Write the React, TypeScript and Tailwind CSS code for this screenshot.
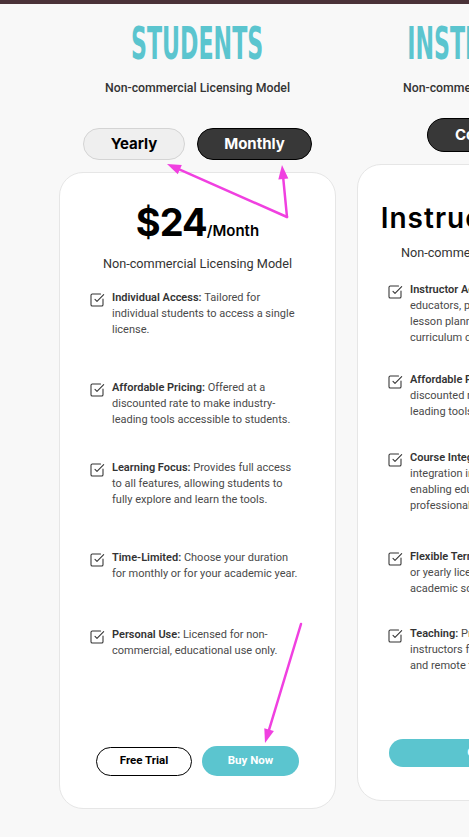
import { SquareCheckBig } from "lucide-react";
import type { ReactNode } from "react";

function Title({ children }: { children: ReactNode }) {
  return (
    <div className="mt-[18px] h-[44px] flex justify-center items-start">
      <span className="inline-block text-[44px] leading-none font-bold text-[#5bc5cf] scale-x-[0.56] whitespace-nowrap font-[family-name:'Liberation_Sans_Narrow','DejaVu_Sans_Condensed',sans-serif]">
        {children}
      </span>
    </div>
  );
}

function Feature({
  label,
  lines,
  className,
}: {
  label: string;
  lines: string[];
  className: string;
}) {
  return (
    <div className={"flex gap-[7px] " + className}>
      <SquareCheckBig
        size={16}
        strokeWidth={1.6}
        color="#333333"
        className="shrink-0 mt-[2px]"
      />
      <p className="text-[11px] leading-[16px] text-[#4a4a4a] whitespace-nowrap">
        {lines.map((l, i) => (
          <span key={i} className="block">
            {i === 0 && <span className="font-semibold text-[#333]">{label} </span>}
            {l}
          </span>
        ))}
      </p>
    </div>
  );
}

export default function App() {
  return (
    <div className="relative w-[469px] h-[837px] overflow-hidden bg-[#f8f8f8] font-[family-name:Roboto,sans-serif]">
      <div className="h-[4px] bg-[#4a3238]" />
      <div className="flex pl-[59px] gap-[21px]">
        {/* Students column */}
        <div className="w-[277px] shrink-0 flex flex-col items-center">
          <Title>STUDENTS</Title>
          <p className="mt-[14px] text-[12.3px] leading-[16px] font-medium text-[#333] whitespace-nowrap">
            Non-commercial Licensing Model
          </p>
          <div className="mt-[32px] flex gap-[12px] font-[family-name:Inter,sans-serif]">
            <button className="w-[102px] h-[32px] rounded-full bg-[#efefef] border border-[#d4d4d4] text-[15px] font-bold text-black">
              Yearly
            </button>
            <button className="w-[115px] h-[32px] rounded-full bg-[#383838] border border-black text-[15px] font-bold text-white">
              Monthly
            </button>
          </div>
          <div className="mt-[12px] w-full h-[637px] rounded-[24px] bg-white border border-[#e6e6e6] flex flex-col">
            <div className="mt-[29px] flex items-baseline justify-center font-[family-name:Inter,sans-serif] text-black">
              <span className="text-[38px] leading-[40px] font-bold tracking-[-1px]">$24</span>
              <span className="text-[15px] font-semibold">/Month</span>
            </div>
            <p className="mt-[13px] text-center text-[12.7px] leading-[16px] text-[#333]">
              Non-commercial Licensing Model
            </p>
            <div className="mt-[18px] pl-[29px] flex flex-col">
              <Feature
                className="h-[90px]"
                label="Individual Access:"
                lines={["Tailored for", "individual students to access a single", "license."]}
              />
              <Feature
                className="h-[80px]"
                label="Affordable Pricing:"
                lines={["Offered at a", "discounted rate to make industry-", "leading tools accessible to students."]}
              />
              <Feature
                className="h-[90px]"
                label="Learning Focus:"
                lines={["Provides full access", "to all features, allowing students to", "fully explore and learn the tools."]}
              />
              <Feature
                className="h-[77px]"
                label="Time-Limited:"
                lines={["Choose your duration", "for monthly or for your academic year."]}
              />
              <Feature
                className="h-[32px]"
                label="Personal Use:"
                lines={["Licensed for non-", "commercial, educational use only."]}
              />
            </div>
            <div className="mt-auto mb-[32px] flex justify-center items-center gap-[10px] font-[family-name:Roboto,sans-serif]">
              <button className="w-[96px] h-[29px] rounded-full border border-black bg-white text-[11.5px] font-bold text-black">
                Free Trial
              </button>
              <button className="w-[97px] h-[30px] rounded-full bg-[#5bc5cf] text-[11.5px] font-bold text-white">
                Buy Now
              </button>
            </div>
          </div>
        </div>

        {/* Instructors column */}
        <div className="w-[277px] shrink-0 flex flex-col items-center">
          <Title>INSTRUCTORS</Title>
          <p className="mt-[14px] text-[12.3px] leading-[16px] font-medium text-[#333] whitespace-nowrap">
            Non-commercial Licensing Model
          </p>
          <div className="mt-[22px] flex font-[family-name:Inter,sans-serif]">
            <button className="w-[137px] h-[34px] rounded-full bg-[#383838] border border-black text-[15px] font-bold text-white">
              Contact Us
            </button>
          </div>
          <div className="mt-[12px] w-full h-[637px] rounded-[24px] bg-white border border-[#e6e6e6] flex flex-col">
            <p className="mt-[39px] text-center text-[28px] leading-[28px] font-semibold tracking-[1px] text-black whitespace-nowrap font-[family-name:Inter,sans-serif]">
              Instructor Plans
            </p>
            <p className="mt-[13px] text-center text-[12.7px] leading-[16px] text-[#333] whitespace-nowrap">
              Non-commercial Licensing Model
            </p>
            <div className="mt-[21px] pl-[29px] flex flex-col">
              <Feature
                className="h-[90px]"
                label="Instructor Access:"
                lines={["Tailored for", "educators,  providing tools for", "lesson planning and", "curriculum design."]}
              />
              <Feature
                className="h-[78px]"
                label="Affordable Pricing:"
                lines={["Offered at a", "discounted rate to make industry-", "leading tools accessible to instructors."]}
              />
              <Feature
                className="h-[99px]"
                label="Course Integration:"
                lines={["Seamless", "integration into courses,", "enabling educators to teach", "professional-grade tools."]}
              />
              <Feature
                className="h-[77px]"
                label="Flexible Terms:"
                lines={["Choose monthly", "or yearly licenses to fit your", "academic schedule."]}
              />
              <Feature
                className="h-[48px]"
                label="Teaching:"
                lines={["Provides", "instructors for in-class", "and remote teaching."]}
              />
            </div>
            <div className="mt-auto mb-[33px] flex justify-center">
              <button className="w-[213px] h-[28px] rounded-full bg-[#5bc5cf] text-[11.5px] font-bold text-white">
                Contact Us
              </button>
            </div>
          </div>
        </div>
      </div>

      {/* annotation arrows */}
      <svg
        className="absolute inset-0 pointer-events-none"
        width="469"
        height="837"
        viewBox="0 0 469 837"
      >
        <g stroke="#f040e0" strokeWidth="2.5" strokeLinecap="round" fill="#f040e0">
          <line x1="287" y1="217" x2="179.8" y2="169.7" />
          <polygon points="167,164 181.8,165.1 177.8,174.3" stroke="none" />
          <line x1="287" y1="217" x2="283.3" y2="178.9" />
          <polygon points="282,165 288.3,178.4 278.3,179.4" stroke="none" />
          <line x1="301" y1="624" x2="269.1" y2="729.6" />
          <polygon points="265,743 273.9,731 264.3,728.2" stroke="none" />
        </g>
      </svg>
    </div>
  );
}
